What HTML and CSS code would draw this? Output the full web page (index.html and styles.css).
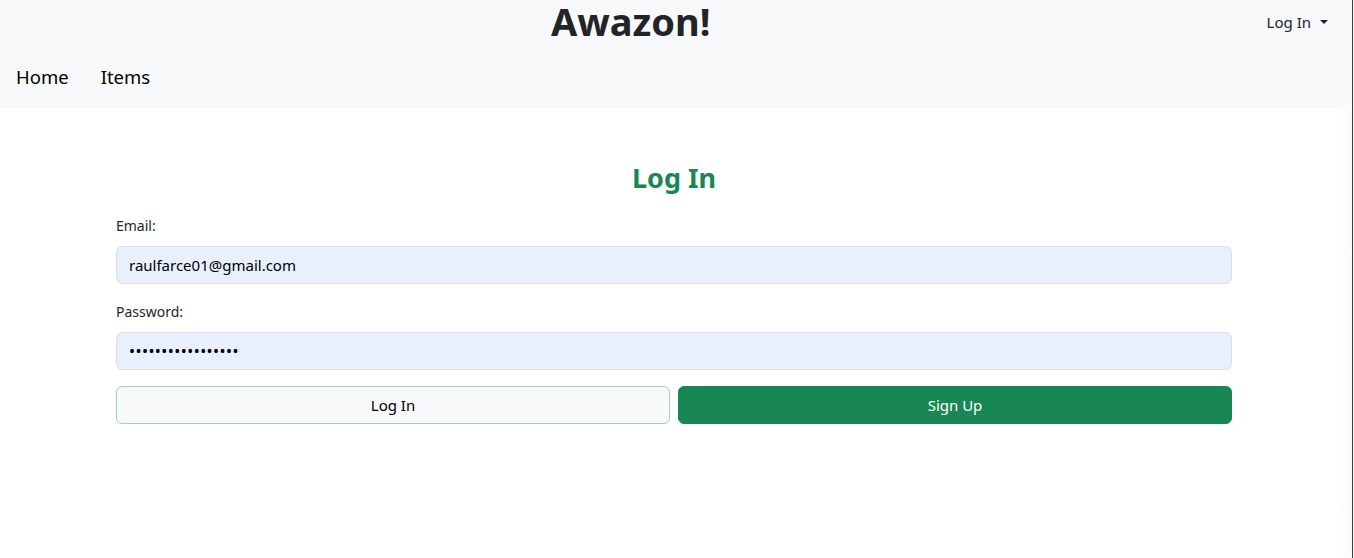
FILE: index.html
```html
<!DOCTYPE html>
<html lang="en">
<head>
<meta charset="utf-8">
<title>Awazon!</title>
<link rel="stylesheet" href="styles.css">
</head>
<body>
<div class="page">
  <header class="navbar">
    <div class="top-row">
      <h1 class="brand">Awazon!</h1>
      <div class="dropdown">Log In <span class="caret"></span></div>
    </div>
    <nav class="nav-row">
      <a class="nav-link" href="#">Home</a>
      <a class="nav-link" href="#">Items</a>
    </nav>
  </header>
  <main class="container">
    <h3 class="title">Log In</h3>
    <form class="form">
      <label class="form-label">Email:</label>
      <div class="form-control">raulfarce01@gmail.com</div>
      <label class="form-label">Password:</label>
      <div class="form-control dots">•••••••••••••••••</div>
      <div class="btn-row">
        <button type="button" class="btn btn-light">Log In</button>
        <button type="button" class="btn btn-success">Sign Up</button>
      </div>
    </form>
  </main>
</div>
</body>
</html>
```
FILE: styles.css
```css
html, body {
  margin: 0;
  padding: 0;
  background: #f3f3f3;
  height: 100%;
}
body {
  font-family: "Noto Sans", "Open Sans", sans-serif;
  color: #212529;
}
.page {
  width: 1353px;
  height: 558px;
  background: linear-gradient(to right, #ffffff 1335px, #fafafa 1351px);
  border-right: 1px solid #3c4043;
  box-sizing: border-box;
}
.navbar {
  background: #f8f9fa;
  height: 108px;
  box-sizing: border-box;
}
.top-row {
  display: flex;
  align-items: flex-start;
  height: 63px;
}
.brand {
  margin: 0 0 0 551px;
  font-size: 38px;
  font-weight: 700;
  line-height: 42px;
  color: #212529;
}
.dropdown {
  margin-left: auto;
  margin-right: 24px;
  margin-top: 11px;
  font-size: 15px;
  line-height: 22px;
  display: flex;
  align-items: center;
}
.caret {
  display: inline-block;
  margin-left: 9px;
  width: 0;
  height: 0;
  border-left: 4px solid transparent;
  border-right: 4px solid transparent;
  border-top: 4.5px solid #212529;
}
.nav-row {
  display: flex;
  gap: 32px;
  padding-left: 16px;
}
.nav-link {
  font-size: 18.5px;
  line-height: 28px;
  color: #000;
  text-decoration: none;
}
.container {
  margin-left: 116px;
  width: 1116px;
  padding-top: 53px;
}
.title {
  margin: 0 0 19px 0;
  text-align: center;
  color: #198754;
  font-size: 27px;
  line-height: 34px;
  font-weight: 700;
}
.form {
  display: flex;
  flex-direction: column;
}
.form-label {
  font-size: 14px;
  line-height: 24px;
  margin-bottom: 8px;
  color: #212529;
}
.form-control {
  height: 38px;
  box-sizing: border-box;
  border: 1px solid #dee2e6;
  border-radius: 6px;
  background: #e8f0fe;
  padding: 0 12px;
  font-size: 15px;
  line-height: 36px;
  color: #000;
  margin-bottom: 16px;
}
.dots {
  font-size: 16px;
  letter-spacing: 0.45px;
}
.btn-row {
  display: flex;
  gap: 8px;
}
.btn {
  flex: 1;
  height: 38px;
  border-radius: 6px;
  font-family: "Noto Sans", "Open Sans", sans-serif;
  font-size: 15px;
  cursor: pointer;
}
.btn-light {
  background: #f8f9fa;
  border: 1px solid #a3cfbb;
  color: #000;
}
.btn-success {
  background: #198754;
  border: 1px solid #198754;
  color: #fff;
}
```
